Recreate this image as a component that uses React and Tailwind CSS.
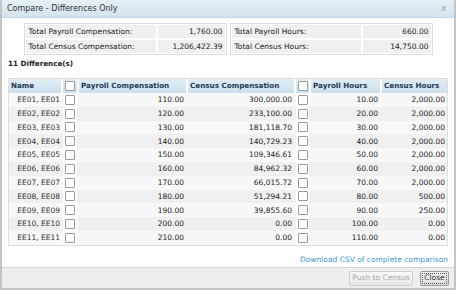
const rows = [
  ['EE01, EE01', '110.00', '300,000.00', '10.00', '2,000.00'],
  ['EE02, EE02', '120.00', '233,100.00', '20.00', '2,000.00'],
  ['EE03, EE03', '130.00', '181,118.70', '30.00', '2,000.00'],
  ['EE04, EE04', '140.00', '140,729.23', '40.00', '2,000.00'],
  ['EE05, EE05', '150.00', '109,346.61', '50.00', '2,000.00'],
  ['EE06, EE06', '160.00', '84,962.32', '60.00', '2,000.00'],
  ['EE07, EE07', '170.00', '66,015.72', '70.00', '2,000.00'],
  ['EE08, EE08', '180.00', '51,294.21', '80.00', '500.00'],
  ['EE09, EE09', '190.00', '39,855.60', '90.00', '250.00'],
  ['EE10, EE10', '200.00', '0.00', '100.00', '0.00'],
  ['EE11, EE11', '210.00', '0.00', '110.00', '0.00'],
];

const cols = 'grid grid-cols-[52px_14px_107px_106px_13px_69px_65px] gap-x-[2px]';

function Box() {
  return <span className="block w-[10px] h-[10px] border border-[#9a9a9a] bg-white rounded-[1px]" />;
}

function Summary({ items, labelW }) {
  return (
    <div className="border border-[#dcdcdc] p-[1px] flex flex-col gap-[2px] w-[203px]">
      {items.map(([k, v]) => (
        <div key={k} className="flex gap-[2px] h-[13px]">
          <div className="bg-[#f0f0f0] flex items-center pl-[3px]" style={{ width: labelW }}>{k}</div>
          <div className="bg-[#f0f0f0] flex-1 flex items-center justify-end pr-[2px]">{v}</div>
        </div>
      ))}
    </div>
  );
}

export default function App() {
  return (
    <div className="w-[456px] h-[290px] bg-white text-[7.5px] text-[#222] flex flex-col border-x-2 border-b-2 border-[#c4c4c4]" style={{ fontFamily: '"DejaVu Sans", Verdana, sans-serif' }}>
      {/* title bar */}
      <div className="h-[18px] shrink-0 bg-gradient-to-b from-[#e6f0f6] to-[#d3e3ee] border-b border-[#c6d7e3] flex items-center justify-between pl-[5px] pr-[8px]">
        <span className="text-[8px] text-[#333]">Compare - Differences Only</span>
        <span className="text-[8px] text-[#999]">x</span>
      </div>

      <div className="flex-1 flex flex-col px-[5px]">
        <div className="flex justify-center gap-[3px] mt-[5px]">
          <Summary labelW={130} items={[['Total Payroll Compensation:', '1,760.00'], ['Total Census Compensation:', '1,206,422.39']]} />
          <Summary labelW={129} items={[['Total Payroll Hours:', '660.00'], ['Total Census Hours:', '14,750.00']]} />
        </div>

        <div className="font-bold text-[7.2px] mt-[2px] h-[14px] flex items-center pl-[1px]">11 Difference(s)</div>

        <div className="ml-[1px] mt-[7px] w-[440px] border border-[#dedede] bg-white">
          <div className={cols + ' h-[14px] font-bold text-[7.2px] text-[#1d3a55]'}>
            <div className="bg-gradient-to-b from-[#e2edf5] to-[#cddfec] flex items-center pl-[2px]">Name</div>
            <div className="bg-gradient-to-b from-[#e2edf5] to-[#cddfec] flex items-center justify-center"><Box /></div>
            <div className="bg-gradient-to-b from-[#e2edf5] to-[#cddfec] flex items-center pl-[2px]">Payroll Compensation</div>
            <div className="bg-gradient-to-b from-[#e2edf5] to-[#cddfec] flex items-center pl-[2px]">Census Compensation</div>
            <div className="bg-gradient-to-b from-[#e2edf5] to-[#cddfec] flex items-center justify-center"><Box /></div>
            <div className="bg-gradient-to-b from-[#e2edf5] to-[#cddfec] flex items-center pl-[2px]">Payroll Hours</div>
            <div className="bg-gradient-to-b from-[#e2edf5] to-[#cddfec] flex items-center pl-[2px]">Census Hours</div>
          </div>
          {rows.map((r, i) => (
            <div key={r[0]} className={cols + ' h-[13.8px] ' + (i % 2 ? 'bg-[#f0f0f0]' : 'bg-[#f8f8f8]')}>
              <div className="flex items-center justify-end pr-[1px] text-[#333]">{r[0]}</div>
              <div className="flex items-center justify-center bg-white"><Box /></div>
              <div className="flex items-center justify-end pr-[2px]">{r[1]}</div>
              <div className="flex items-center justify-end pr-[2px]">{r[2]}</div>
              <div className="flex items-center justify-center bg-white"><Box /></div>
              <div className="flex items-center justify-end pr-[2px]">{r[3]}</div>
              <div className="flex items-center justify-end pr-[2px]">{r[4]}</div>
            </div>
          ))}
        </div>

        <div className="flex justify-end mt-[8px] pr-[1px]">
          <span className="text-[#3b9ad6]">Download CSV of complete comparison</span>
        </div>
      </div>

      <div className="h-[21px] shrink-0 bg-[#eeeeee] border-t border-[#d4d4d4] flex items-center justify-end gap-[7px] pr-[5px]">
        <button className="h-[15px] w-[64px] border border-[#d0d0d0] rounded-[2px] bg-gradient-to-b from-[#f8f8f8] to-[#e8e8e8] text-[#aaa] text-[7.5px]">Push to Census</button>
        <button className="h-[15px] w-[29px] border border-[#9a9a9a] rounded-[2px] bg-gradient-to-b from-[#f4f4f4] to-[#dcdcdc] text-[#333] text-[7.5px] outline outline-1 outline-dotted outline-offset-[-3px] outline-[#555]">Close</button>
      </div>
    </div>
  );
}
